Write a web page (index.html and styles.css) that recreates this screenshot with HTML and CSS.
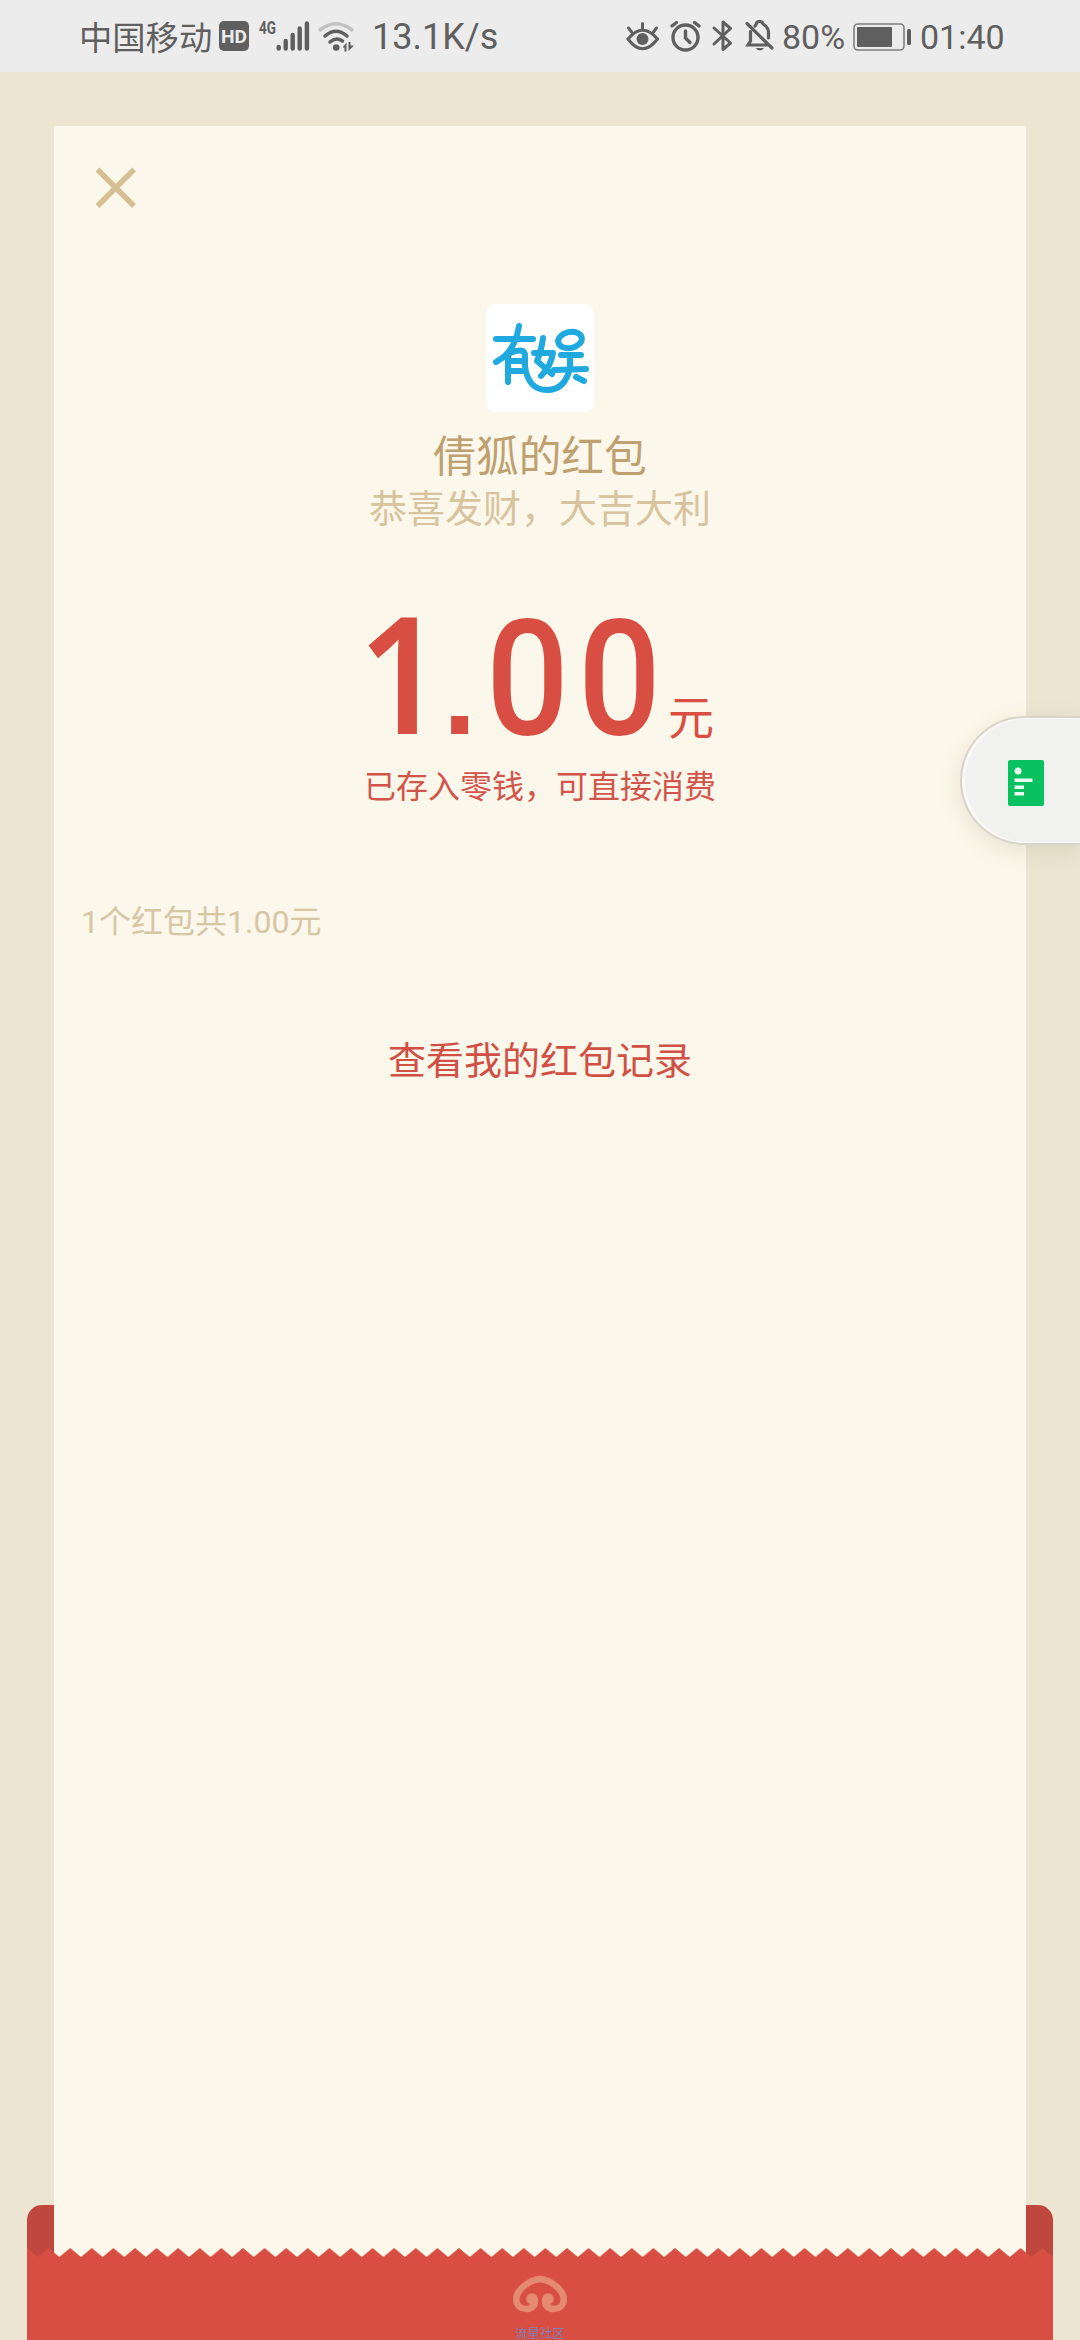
FILE: index.html
```html
<!DOCTYPE html>
<html lang="zh-CN">
<head>
<meta charset="utf-8">
<title>红包</title>
<link rel="stylesheet" href="styles.css">
</head>
<body>
<header class="status">
  <div class="status-left">
    <span class="carrier">中国移动</span>
    <svg class="ic-hd" width="30" height="30" viewBox="0 0 30 30"><rect width="30" height="30" rx="5" fill="#5f5f5f"/><text x="15" y="21.500" text-anchor="middle" textLength="26" lengthAdjust="spacingAndGlyphs" class="hd-text">HD</text></svg>
    <svg class="ic-signal" width="52" height="34" viewBox="0 0 52 34"><text x="1" y="15" textLength="17" lengthAdjust="spacingAndGlyphs" class="net-text">4G</text><g stroke="#5f5f5f" stroke-width="4.400" stroke-linecap="round"><path d="M20.700 28V29.500M27.700 22V29.500M34.700 16V29.500M41.700 9.500V29.500M48.900 4.500V29.500"/></g></svg>
    <svg class="ic-wifi" width="38" height="32" viewBox="0 0 38 32"><g fill="none" stroke-linecap="round" stroke-width="3.500"><path d="M2 9Q18 -3.500 34 9" stroke="#c2c2c2"/><path d="M7 15Q18 5.500 29 15M12 21Q18 15.500 24.500 20" stroke="#5f5f5f"/></g><circle cx="18.200" cy="26.500" r="3.300" fill="#5f5f5f"/><path d="M24.500 26.500 28.500 21.500V30.500H26.500V26.500ZM30.500 21H32.500V24.500H36L30.500 30Z" fill="#5f5f5f"/></svg>
    <span class="speed">13.1K/s</span>
  </div>
  <div class="status-right">
    <svg class="ic-eye" width="34" height="32" viewBox="0 0 34 32"><g fill="none" stroke="#5f5f5f" stroke-width="3" stroke-linecap="round"><path d="M2 19Q16.500 1.500 31.500 19Q16.500 38.500 2 19ZM16.500 3.500V9M2.500 8 5.500 12M30.500 8 27.500 12"/></g><circle cx="16.500" cy="19" r="6" fill="#5f5f5f"/></svg>
    <svg class="ic-alarm" width="31" height="32" viewBox="0 0 31 32"><g fill="none" stroke="#5f5f5f" stroke-width="3.400" stroke-linecap="round"><circle cx="15.500" cy="17.500" r="12.500"/><path d="M15.500 11V18L20 22.500M2 6 6.500 2.500M29 6 24.500 2.500"/></g></svg>
    <svg class="ic-bt" width="22" height="34" viewBox="0 0 22 34"><path d="M2 9 18.500 24 11 30.500V3L18.500 9.500 2 25" fill="none" stroke="#5f5f5f" stroke-width="3" stroke-linecap="round" stroke-linejoin="round"/></svg>
    <svg class="ic-bell" width="29" height="33" viewBox="0 0 29 33"><g fill="none" stroke="#5f5f5f" stroke-width="3.200" stroke-linecap="round"><path d="M2 4.500 27 29M5.500 12.500V22L3 26H22M10 7C11 6 11.500 5.500 11.500 4 12.500 1.800 16.500 1.800 17.500 4 17.500 6 23 6 23.500 13V19"/></g><path d="M10.500 29H19Q15 34 10.500 29Z" fill="#5f5f5f"/></svg>
    <span class="percent">80%</span>
    <svg class="ic-battery" width="59" height="28" viewBox="0 0 59 28"><rect x="1" y="1" width="50" height="26" rx="4" fill="none" stroke="#7d7d7d" stroke-width="1.600"/><rect x="4" y="4" width="35" height="20" rx="1" fill="#5f5f5f"/><rect x="54" y="6" width="4" height="16" rx="1.500" fill="#5f5f5f"/></svg>
    <span class="clock">01:40</span>
  </div>
</header>

<main class="stage">
  <div class="envelope-back"></div>
  <section class="card">
    <svg class="close" width="42" height="42" viewBox="0 0 42 42"><path d="M2.500 2.500 39 39M39 2.500 2.500 39" stroke="#d6bf93" stroke-width="5.400"/></svg>
    <div class="avatar">
      <svg width="108" height="108" viewBox="0 0 108 108"><g fill="none" stroke="#20a9df" stroke-width="6" stroke-linecap="round" stroke-linejoin="round"><path d="M10 35H47M33 22Q29 48 10 58M22 50V78M22 50Q39 42 39 52V62Q42 86 61 86Q79 86 84 64M23 57H37M23 67H37"/><path d="M57 34Q55 48 51 57L66 70M48 49H67Q65 62 55 72"/><ellipse cx="84" cy="36" rx="12" ry="8" transform="rotate(-12 84 36)"/><path d="M75 51H95M68 66 100 65M84 51V64M90 73 98 77"/></g></svg>
    </div>
    <h1 class="title">倩狐的红包</h1>
    <p class="wish">恭喜发财，大吉大利</p>
    <div class="amount"><span class="one">1</span><span class="dot">.</span><span class="zero">0</span><span class="zero">0</span><span class="unit">元</span></div>
    <p class="note">已存入零钱，可直接消费</p>
    <p class="summary">1个红包共1.00元</p>
    <a class="records">查看我的红包记录</a>
  </section>
  <footer class="envelope-front">
    <svg class="teeth" width="1026" height="10" viewBox="0 0 1026 10"><defs><pattern id="tooth" width="21.600" height="10" patternUnits="userSpaceOnUse"><path d="M0 0 10.800 9 21.600 0V10H0Z" fill="#d94e42"/></pattern></defs><rect width="1026" height="10" fill="url(#tooth)"/></svg>
    <div class="front-body">
      <svg class="emblem" width="54" height="38" viewBox="0 0 54 38"><g fill="none" stroke="#e48a70" stroke-width="6.500" stroke-linecap="round" stroke-linejoin="round"><path d="M27 4C17 5 3 14 3.300 25C4 37 23 37 22 25M27 4C37 5 51 14 50.700 25C50 37 31 37 32 25"/></g><g fill="#e48a70"><circle cx="19" cy="24" r="5.800"/><circle cx="35" cy="24" r="5.800"/></g></svg>
      <span class="community">流星社区</span>
    </div>
  </footer>
  <aside class="float-tab">
    <svg width="36" height="46" viewBox="0 0 36 46"><rect width="36" height="46" rx="2" fill="#0ac160"/><g fill="#e9faef"><circle cx="10" cy="11" r="3.500"/><rect x="6.500" y="18.500" width="18" height="3.500"/><rect x="6.500" y="25.500" width="9.500" height="3.500"/><rect x="6.500" y="32" width="9.500" height="3.500"/></g></svg>
  </aside>
</main>
</body>
</html>
```
FILE: styles.css
```css
* { box-sizing: border-box; }
body {
  margin: 0;
  width: 1080px;
  height: 2340px;
  overflow: hidden;
  display: flex;
  flex-direction: column;
  background: #ece5d2;
  font-family: Roboto, "Noto Sans CJK SC", sans-serif;
}
h1, p { margin: 0; font-weight: 400; }
svg { display: block; flex: none; overflow: visible; }

.status {
  height: 72px;
  flex: none;
  background: #ececec;
  color: #5f5f5f;
  display: flex;
  justify-content: space-between;
  padding: 0 74px 0 79px;
  white-space: nowrap;
}
.status-left, .status-right { display: flex; align-items: flex-start; }
.carrier { width: 140px; font-size: 33.300px; line-height: 72px; font-weight: 400; font-family: "Noto Sans CJK SC", sans-serif; }
.ic-hd { margin-top: 21px; }
.hd-text { font: 700 18px Roboto, sans-serif; fill: #ececec; }
.ic-signal { margin: 19px 0 0 9px; }
.net-text { font: 700 18px Roboto, sans-serif; fill: #5f5f5f; }
.ic-wifi { margin: 21px 0 0 8px; }
.speed { margin-left: 16px; width: 130px; font-size: 36px; line-height: 75px; }
.ic-eye { margin-top: 20px; }
.ic-alarm { margin: 20px 0 0 10px; }
.ic-bt { margin: 19px 0 0 11px; }
.ic-bell { margin: 19px 0 0 11px; }
.percent { margin-left: 8px; width: 71px; font-size: 34px; line-height: 74px; }
.ic-battery { margin-top: 23px; }
.clock { margin-left: 8px; width: 86px; font-size: 34px; line-height: 74px; }

/* Envelope layers share a single grid cell */
.stage {
  flex: 1;
  display: grid;
  grid-template: 1fr / 1fr;
  position: relative;
}
.envelope-back, .card, .envelope-front { grid-area: 1 / 1; }
.envelope-back { margin: 2133px 27px 0; background: #c0473e; border-radius: 15px 15px 0 0; }
.card {
  margin: 54px 54px 80px;
  background: #fbf7ea;
  border-radius: 2px 2px 0 0;
  display: flex;
  flex-direction: column;
  align-items: center;
}
.close { align-self: flex-start; margin: 41px 0 0 41px; }
.avatar { margin-top: 95px; width: 108px; height: 108px; border-radius: 10px; background: #fff; }
.title { margin-top: 17px; font-size: 42.700px; line-height: 56px; color: #bea071; }
.wish { font-size: 38px; line-height: 48px; color: #d7c39d; }
.amount {
  margin-top: 78px;
  height: 120px;
  width: 348px;
  display: flex;
  align-items: baseline;
  color: #d94e42;
  font-size: 162px;
  line-height: 120px;
  font-weight: 500;
  white-space: nowrap;
}
.one { margin-left: -8px; width: 85px; font-family: "Noto Sans", sans-serif; font-weight: 600; transform: scaleX(.93); transform-origin: left; }
.dot { width: 43px; font-family: "Liberation Sans", sans-serif; font-weight: 700; font-size: 120px; }
.zero { width: 92px; transform: scaleX(.9); transform-origin: left; }
.unit { margin-left: -2px; font-size: 46px; line-height: 60px; font-weight: 400; font-family: "Noto Sans CJK SC", sans-serif; }
.note { margin-top: 34px; font-size: 32px; line-height: 44px; color: #d2544a; }
.summary { align-self: flex-start; margin: 90px 0 0 27px; font-size: 32px; line-height: 46px; color: #d7c6a4; }
.records { margin-top: 91px; font-size: 38px; line-height: 50px; color: #d05046; }

.envelope-front { align-self: end; margin: 0 27px; height: 92px; display: flex; flex-direction: column; }
.front-body { flex: 1; margin-top: -1px; background: #d94e42; display: flex; flex-direction: column; align-items: center; }
.emblem { margin-top: 18px; }
.community { margin-top: 12px; font-size: 12.500px; line-height: 18px; color: #7e7fb4; }

/* Side tab floating over the card edge */
.float-tab {
  position: absolute;
  right: 0;
  top: 644px;
  width: 120px;
  height: 129px;
  padding: 42px 0 0 46px;
  border: 2px solid #d9d4c9;
  border-right: 0;
  border-radius: 65px 0 0 65px;
  background: #f1f1f0;
  box-shadow: inset 2px 0 0 1px #faf9f6, 0 6px 22px rgba(120, 100, 50, .14);
}
```
